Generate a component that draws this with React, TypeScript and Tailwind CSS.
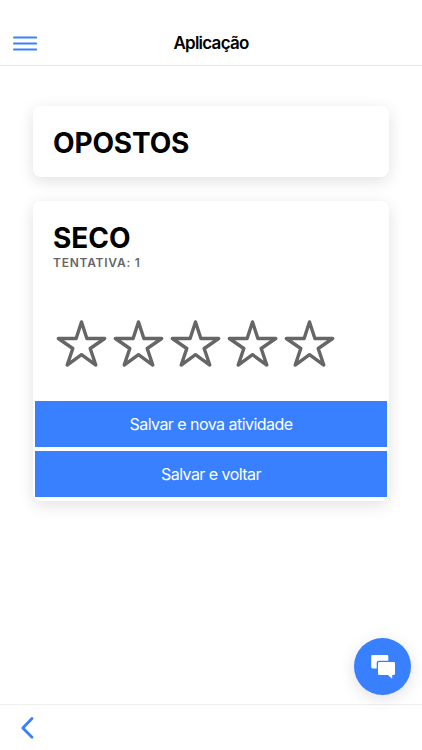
import { useState } from 'react';

const STAR_PATH = 'M480 208H308L256 48l-52 160H32l140 96-54 160 138-100 138 100-54-160z';

const App = () => {
  const [rating, setRating] = useState(0);

  return (
    <div className="relative flex h-[750px] w-full flex-col bg-white font-['Inter',sans-serif] text-black">
      {/* Header */}
      <header className="flex h-[66px] shrink-0 items-end border-b border-[#e9e9e9] px-[13px] pb-[9px]">
        <button className="flex h-[26px] w-[60px] items-center" aria-label="Menu">
          <svg className="h-[16px] w-[25px]" viewBox="0 0 25 16" stroke="#3880ff" strokeWidth="2" strokeLinecap="round">
            <path d="M1 2.5h22.2M1 8.5h22.2M1 14.5h22.2" />
          </svg>
        </button>
        <h1 className="flex-1 pt-px text-center text-[17px] leading-[25px] font-semibold tracking-[-0.75px]">Aplicação</h1>
        <div className="w-[60px]" />
      </header>

      <main className="flex-1 px-[33px] pt-[40px]">
        {/* Activity */}
        <section className="h-[71px] rounded-[8px] px-[20px] pt-[20px] shadow-[0_4px_16px_rgba(0,0,0,0.12)]">
          <h2 className="text-[28px] leading-[34px] font-bold tracking-[-0.15px]">OPOSTOS</h2>
        </section>

        {/* Attempt */}
        <section className="mt-[24px] h-[300px] rounded-[8px] px-[2px] pt-[20px] shadow-[0_4px_16px_rgba(0,0,0,0.12)]">
          <div className="px-[18px]">
            <h2 className="text-[28px] leading-[34px] font-bold tracking-[-0.05px]">SECO</h2>
            <p className="text-[12px] leading-[16px] font-semibold tracking-[0.75px] text-[#666666]">TENTATIVA: 1</p>
          </div>

          <div className="mt-[46px] flex h-[53px] gap-[4px] pl-[20px]">
            {[1, 2, 3, 4, 5].map((value) => (
              <button key={value} onClick={() => setRating(value)} aria-label={`${value}`}>
                <svg
                  className="h-[53px] w-[53px]"
                  viewBox="0 0 512 512"
                  fill={value <= rating ? '#666666' : 'none'}
                  stroke="#666666"
                  strokeWidth="33"
                  strokeLinejoin="round"
                >
                  <path d={STAR_PATH} />
                </svg>
              </button>
            ))}
          </div>

          <div className="mt-[31px] flex flex-col gap-[4px]">
            <button className="h-[46px] bg-[#3880ff] text-[16px] tracking-[-0.54px] text-white">
              Salvar e nova atividade
            </button>
            <button className="h-[46px] bg-[#3880ff] text-[16px] tracking-[-0.54px] text-white">
              Salvar e voltar
            </button>
          </div>
        </section>
      </main>

      {/* Footer */}
      <footer className="flex h-[46px] shrink-0 items-center border-t border-[#f0f0f0] pl-[20px]">
        <button aria-label="Voltar">
          <svg className="h-[24px] w-[14px]" viewBox="0 0 14 24" fill="none" stroke="#3880ff" strokeWidth="2.8" strokeLinecap="round" strokeLinejoin="round">
            <path d="M12 2.6L2.8 12L12 21.2" />
          </svg>
        </button>
      </footer>

      {/* Chat */}
      <button
        className="absolute top-[638px] left-[354px] flex h-[57px] w-[57px] items-center justify-center rounded-full bg-[#3880ff] shadow-[0_4px_16px_rgba(0,0,0,0.12)]"
        aria-label="Chat"
      >
        <svg className="h-[24px] w-[24px]" viewBox="0 0 24 24" fill="white">
          <path d="M1.5 0H16Q17.3 0 17.3 1.3V5.7H7.8Q5.7 5.7 5.7 7.8V13.4H1.5Q.2 13.4.2 12.1V1.3Q.2 0 1.5 0Z" />
          <path d="M8.4 7H22.6Q24 7 24 8.4V18.7Q24 20 22.6 20H21.2V23Q21.2 24 20.4 23.3L17 20H8.4Q7 20 7 18.7V8.4Q7 7 8.4 7Z" />
        </svg>
      </button>
    </div>
  );
};

export default App;
